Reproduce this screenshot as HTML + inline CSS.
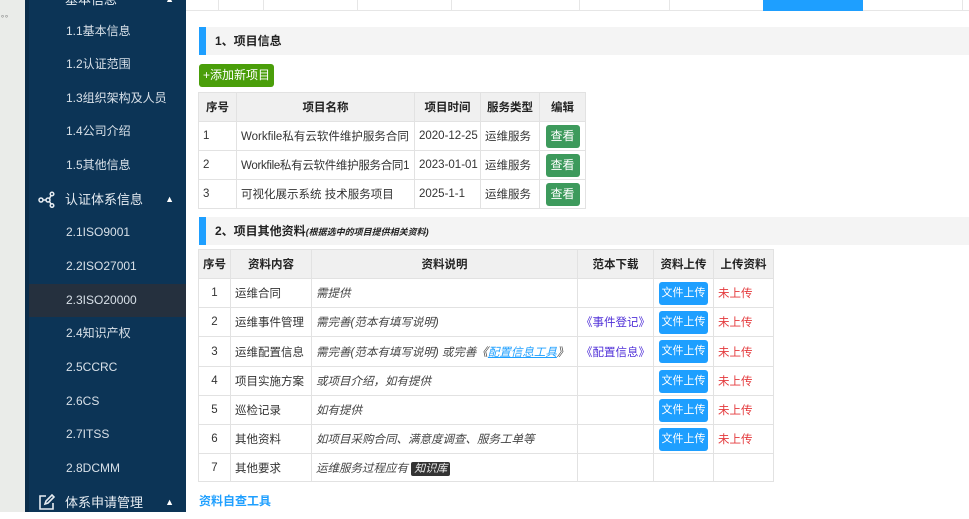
<!DOCTYPE html>
<html><head><meta charset="utf-8"><style>
*{box-sizing:border-box;margin:0;padding:0}
body{width:969px;height:512px;overflow:hidden;background:#fff;font-family:"Liberation Sans","Noto Sans CJK SC",sans-serif;font-size:12px;color:#333;position:relative}
.strip{position:absolute;left:0;top:0;width:25px;height:512px;background:#eaece9}
.side{position:absolute;left:25px;top:0;width:161px;height:512px;background:#0c3456;border-left:4px solid #0a2c49}
.it{position:absolute;left:0;width:157px;height:33px;line-height:33px;color:#d8e0e8;padding-left:37px;font-size:12px}
.grp{position:absolute;left:0;width:157px;height:33px;line-height:33px;color:#e6ecf2;padding-left:36px;font-size:13px}
.grp .ar{position:absolute;right:12px;top:0;font-size:9px;color:#fff}
.ic{position:absolute;left:9px;top:8px}
.tabs{position:absolute;left:186px;top:0;width:783px;height:11px;border-bottom:1px solid #e6e6e6}
.tab{position:absolute;top:0;height:10px;border-right:1px solid #e6e6e6}
.hd{position:absolute;left:199px;width:770px;height:28px;background:#f4f4f4;border-left:7px solid #1e9fff;line-height:28px;padding-left:9px;font-weight:bold;font-size:12px;color:#222}
.hd i{font-size:9px}
table{position:absolute;border-collapse:collapse;table-layout:fixed}
td,th{border:1px solid #e2e2e2;font-size:11.5px;padding:0 4px;white-space:nowrap;overflow:hidden;vertical-align:middle}
th{background:#f0f0f0;font-weight:bold;text-align:center;color:#222;padding:0 2px}
.b{display:inline-block;color:#fff;border-radius:3px;font-size:12px;text-align:center;vertical-align:middle}
.g{background:#3d9a5c;width:34px;height:23px;line-height:23px}
.bl{background:#1e9fff;width:49px;height:23px;line-height:23px;font-size:11px}
.r{color:#e4393c}
.it2{font-style:italic;color:#444}
.pu{color:#5030d8}
</style></head><body>
<div class="strip"><div style="position:absolute;left:0;top:12px;color:#888;font-size:8px;letter-spacing:-1px">∘∘</div></div>
<div class="side">
<div class="grp" style="top:-17px">基本信息<span class="ar">▲</span></div>
<div class="it" style="top:15px">1.1基本信息</div>
<div class="it" style="top:48px">1.2认证范围</div>
<div class="it" style="top:82px">1.3组织架构及人员</div>
<div class="it" style="top:115px">1.4公司介绍</div>
<div class="it" style="top:149px">1.5其他信息</div>
<div class="grp" style="top:183px"><svg class="ic" width="17" height="17" viewBox="0 0 17 17" fill="none" stroke="#e6ecf2" stroke-width="1.5"><circle cx="3" cy="9" r="2"/><circle cx="10" cy="9" r="2"/><circle cx="14" cy="3" r="1.8"/><circle cx="14" cy="14.5" r="1.8"/><path d="M5 9h3M11.5 7.5l1.5-3M11.5 10.5l1.5 2.5"/></svg>认证体系信息<span class="ar">▲</span></div>
<div class="it" style="top:216px">2.1ISO9001</div>
<div class="it" style="top:250px">2.2ISO27001</div>
<div class="it" style="top:284px;background:#25303e">2.3ISO20000</div>
<div class="it" style="top:317px">2.4知识产权</div>
<div class="it" style="top:351px">2.5CCRC</div>
<div class="it" style="top:385px">2.6CS</div>
<div class="it" style="top:418px">2.7ITSS</div>
<div class="it" style="top:452px">2.8DCMM</div>
<div class="grp" style="top:486px"><svg class="ic" width="17" height="17" viewBox="0 0 17 17" fill="none" stroke="#e6ecf2" stroke-width="1.6"><path d="M8 2H2v13h13V9"/><path d="M7 10l1-3 6-6 2 2-6 6z"/></svg>体系申请管理<span class="ar">▲</span></div>
</div>
<div class="tabs">
<div class="tab" style="left:0;width:33px"></div>
<div class="tab" style="left:33px;width:45px"></div>
<div class="tab" style="left:78px;width:94px"></div>
<div class="tab" style="left:172px;width:94px"></div>
<div class="tab" style="left:266px;width:128px"></div>
<div class="tab" style="left:394px;width:90px"></div>
<div class="tab" style="left:577px;width:100px;background:#1e9fff;border:none;height:11px"></div>
<div class="tab" style="left:677px;width:100px"></div>
</div>
<div class="hd" style="top:27px">1、项目信息</div>
<div class="b" style="position:absolute;left:199px;top:64px;width:75px;height:23px;line-height:23px;background:#4a9e0a">+添加新项目</div>
<table style="left:198px;top:92px;width:387px">
<colgroup><col style="width:38px"><col style="width:178px"><col style="width:66px"><col style="width:59px"><col style="width:46px"></colgroup>
<tr style="height:29px"><th>序号</th><th>项目名称</th><th>项目时间</th><th>服务类型</th><th>编辑</th></tr>
<tr style="height:29px"><td>1</td><td>Workfile私有云软件维护服务合同</td><td>2020-12-25</td><td>运维服务</td><td style="text-align:center;padding:0"><span class="b g">查看</span></td></tr>
<tr style="height:29px"><td>2</td><td style="letter-spacing:-0.3px">Workfile私有云软件维护服务合同1</td><td>2023-01-01</td><td>运维服务</td><td style="text-align:center;padding:0"><span class="b g">查看</span></td></tr>
<tr style="height:29px"><td>3</td><td>可视化展示系统 技术服务项目</td><td>2025-1-1</td><td>运维服务</td><td style="text-align:center;padding:0"><span class="b g">查看</span></td></tr>
</table>
<div class="hd" style="top:217px">2、项目其他资料<i>(根据选中的项目提供相关资料)</i></div>
<table style="left:198px;top:249px;width:575px">
<colgroup><col style="width:32px"><col style="width:81px"><col style="width:266px"><col style="width:76px"><col style="width:60px"><col style="width:60px"></colgroup>
<tr style="height:29px"><th>序号</th><th>资料内容</th><th>资料说明</th><th>范本下载</th><th>资料上传</th><th>上传资料</th></tr>
<tr style="height:29px"><td style="text-align:center">1</td><td>运维合同</td><td class="it2">需提供</td><td></td><td style="text-align:center;padding:0"><span class="b bl">文件上传</span></td><td class="r">未上传</td></tr>
<tr style="height:29px"><td style="text-align:center">2</td><td>运维事件管理</td><td class="it2">需完善(范本有填写说明)</td><td class="pu" style="text-align:center;padding:0">《事件登记》</td><td style="text-align:center;padding:0"><span class="b bl">文件上传</span></td><td class="r">未上传</td></tr>
<tr style="height:30px"><td style="text-align:center">3</td><td>运维配置信息</td><td class="it2">需完善(范本有填写说明) 或完善《<u style="color:#1e9fff">配置信息工具</u>》</td><td class="pu" style="text-align:center;padding:0">《配置信息》</td><td style="text-align:center;padding:0"><span class="b bl">文件上传</span></td><td class="r">未上传</td></tr>
<tr style="height:29px"><td style="text-align:center">4</td><td>项目实施方案</td><td class="it2">或项目介绍，如有提供</td><td></td><td style="text-align:center;padding:0"><span class="b bl">文件上传</span></td><td class="r">未上传</td></tr>
<tr style="height:29px"><td style="text-align:center">5</td><td>巡检记录</td><td class="it2">如有提供</td><td></td><td style="text-align:center;padding:0"><span class="b bl">文件上传</span></td><td class="r">未上传</td></tr>
<tr style="height:29px"><td style="text-align:center">6</td><td>其他资料</td><td class="it2">如项目采购合同、满意度调查、服务工单等</td><td></td><td style="text-align:center;padding:0"><span class="b bl">文件上传</span></td><td class="r">未上传</td></tr>
<tr style="height:28px"><td style="text-align:center">7</td><td>其他要求</td><td class="it2">运维服务过程应有 <span style="background:#333;color:#eee;padding:1px 3px;border-radius:2px;font-size:11px">知识库</span></td><td></td><td></td><td></td></tr>
</table>
<div style="position:absolute;left:199px;top:492px;color:#1e9fff;font-weight:bold;font-size:12px">资料自查工具</div>
</body></html>
